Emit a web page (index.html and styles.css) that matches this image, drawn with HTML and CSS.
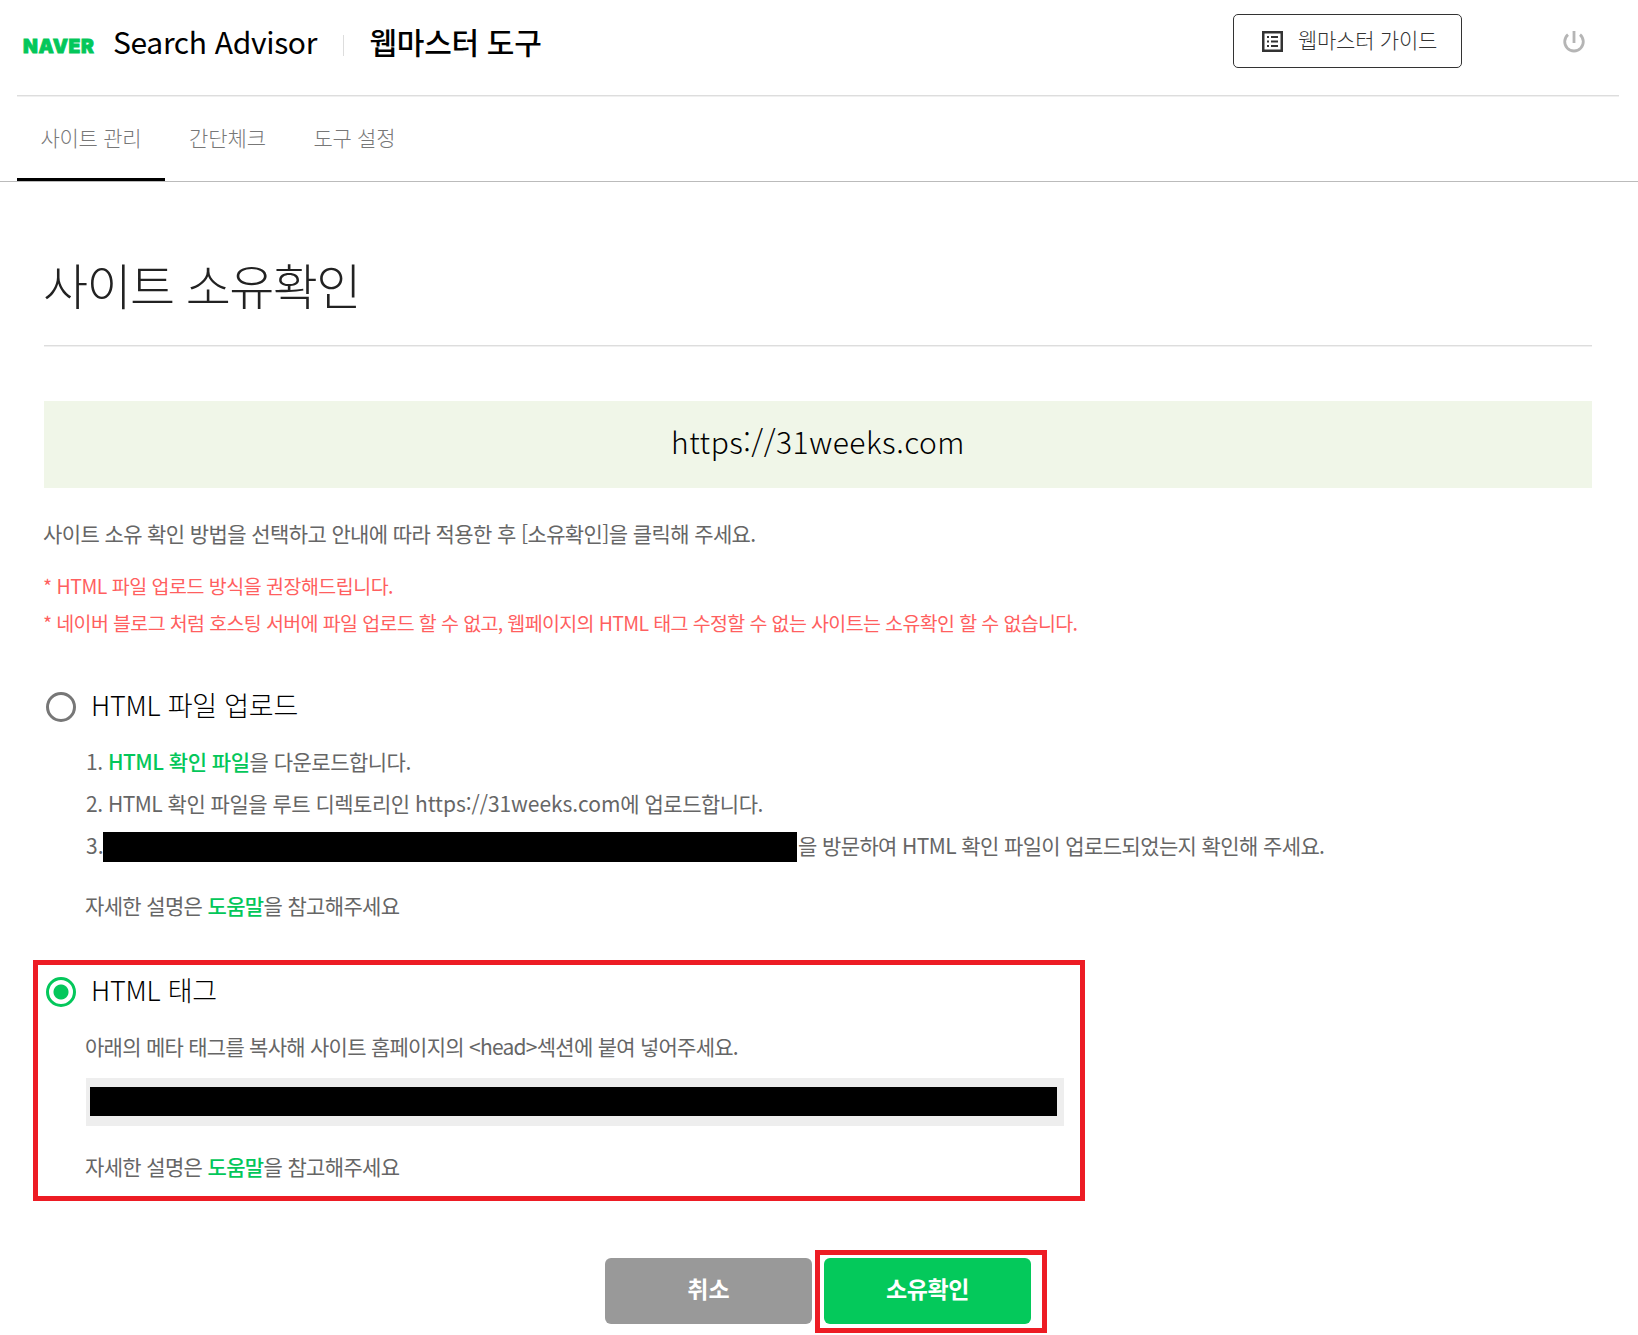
FILE: index.html
```html
<!DOCTYPE html>
<html lang="ko">
<head>
<meta charset="utf-8">
<title>사이트 소유확인</title>
<link rel="stylesheet" href="styles.css">
</head>
<body>
<header class="header">
  <span class="logo">NAVER</span>
  <span class="brand">Search Advisor</span>
  <span class="bar"></span>
  <span class="product">웹마스터 도구</span>
  <a class="guide">
    <svg class="guide-icon" viewBox="0 0 21 21"><path d="M1.250 1.250h18.500v18.500H1.250z" fill="none" stroke="#333" stroke-width="2.500"/><path d="M5 5h2v2H5zM5 9.500h2v2H5zM5 14h2v2H5zM9 5h7v2H9zM9 9.500h7v2H9zM9 14h7v2H9z" fill="#333"/></svg>
    <span>웹마스터 가이드</span>
  </a>
  <svg class="power" viewBox="0 0 22 22"><path d="M11 0v12M5 3.600a9.300 9.300 0 1 0 12 0" fill="none" stroke="#b5b5b5" stroke-width="2.800"/></svg>
</header>
<nav class="tabs">
  <a class="tab tab-site active">사이트 관리</a>
  <a class="tab tab-check">간단체크</a>
  <a class="tab tab-tool">도구 설정</a>
</nav>
<main class="main">
  <h1 class="title">사이트 소유확인</h1>
  <div class="site">https://31weeks.com</div>
  <p class="lead">사이트 소유 확인 방법을 선택하고 안내에 따라 적용한 후 [소유확인]을 클릭해 주세요.</p>
  <div class="notes">
    <p class="note-recommend">* HTML 파일 업로드 방식을 권장해드립니다.</p>
    <p class="note-limit">* 네이버 블로그 처럼 호스팅 서버에 파일 업로드 할 수 없고, 웹페이지의 HTML 태그 수정할 수 없는 사이트는 소유확인 할 수 없습니다.</p>
  </div>
  <section class="method upload">
    <div class="choice"><span class="radio"></span><span class="choice-name">HTML 파일 업로드</span></div>
    <div class="body">
      <p class="step-download">1. <span class="link">HTML 확인 파일</span>을 다운로드합니다.</p>
      <p class="step-upload">2. HTML 확인 파일을 루트 디렉토리인 <span class="url">https://31weeks.com</span>에 업로드합니다.</p>
      <p class="step-visit"><span class="number">3.</span><span class="redact redact-url"></span><span>을 방문하여 HTML 확인 파일이 업로드되었는지 확인해 주세요.</span></p>
      <p class="help">자세한 설명은 <span class="link">도움말</span>을 참고해주세요</p>
    </div>
  </section>
  <section class="method tag">
    <div class="choice"><span class="radio checked"></span><span class="choice-name">HTML 태그</span></div>
    <div class="body">
      <p class="tag-text">아래의 메타 태그를 복사해 사이트 홈페이지의 &lt;head&gt;섹션에 붙여 넣어주세요.</p>
      <div class="code"><span class="redact"></span></div>
      <p class="help">자세한 설명은 <span class="link">도움말</span>을 참고해주세요</p>
    </div>
  </section>
  <div class="actions">
    <button class="btn cancel">취소</button>
    <div class="confirm-wrap"><button class="btn confirm">소유확인</button></div>
  </div>
</main>
</body>
</html>
```
FILE: styles.css
```css
*, *::after { box-sizing: border-box; margin: 0; padding: 0; }
body { width: 1638px; height: 1335px; overflow: hidden; background: #fff; color: #666; font: 300 21px/42px "Noto Sans CJK KR", sans-serif; white-space: nowrap; }
.header { display: flex; height: 96px; margin: 0 19px 0 17px; border-bottom: 1px solid #ddd; box-shadow: 0 1px #f0f0f0; color: #000; }
.logo { width: 96px; padding: 26px 0 0 6px; color: #03c75a; font: 900 19.3px/40px Inter, sans-serif; letter-spacing: 0.6px; -webkit-text-stroke: 0.8px #03c75a; }
.brand { width: 230px; font-size: 30px; font-weight: 400; line-height: 82px; letter-spacing: -0.337px; }
.bar { width: 1px; height: 21px; margin-top: 35px; background: #ddd; }
.product { width: 200px; margin-left: 25.5px; font-size: 30px; font-weight: 500; line-height: 83px; letter-spacing: -0.286px; }
.guide { display: flex; width: 229px; height: 54px; margin: 14px 0 0 auto; padding: 0 0 0 28px; border: 1px solid #333; border-radius: 5px; color: #333; line-height: 48px; letter-spacing: -0.266px; }
.guide-icon { width: 21px; height: 21px; margin: 16px 15px 0 0; }
.power { width: 22px; height: 22px; margin: 31px 34px 0 101px; }
.tabs { display: flex; height: 86px; padding-left: 17px; border-bottom: 1px solid #bbb; color: #777; }
.tab { padding-left: 23.5px; line-height: 82px; border-bottom: 3px solid transparent; letter-spacing: -0.3px; }
.tab-site { width: 148px; }
.tab-check { width: 125px; padding-left: 24px; letter-spacing: -0.07px; }
.active { border-color: #000; }
.main { padding: 72px 46px 0 44px; }
.title { height: 92px; border-bottom: 1px solid #ddd; box-shadow: 0 1px #f0f0f0; color: #222; font-size: 49px; font-weight: 300; line-height: 60px; letter-spacing: -1.55px; text-indent: -1px; }
.site { height: 87px; margin-top: 55px; background: #f0f6e8; color: #000; font-size: 30px; line-height: 80px; letter-spacing: 0.5px; text-align: center; }
.lead { margin: 29px 0 0 -1px; font-weight: 400; line-height: 33px; letter-spacing: -0.605px; }
.notes { margin: 17px 0 0 -1px; color: #ff5f5f; font-size: 19.5px; font-weight: 400; line-height: 37px; }
.note-recommend { letter-spacing: -0.51px; }
.note-limit { letter-spacing: -0.635px; }
.method { position: relative; margin-top: 46px; }
.choice { display: flex; align-items: center; height: 40px; color: #000; font-size: 27px; letter-spacing: -0.237px; }
.radio { width: 30px; height: 30px; margin: 0 15px 0 2px; border: 3px solid #777; border-radius: 50%; }
.checked { border-color: #04c75b; background: radial-gradient(circle, #04c75b 7px, #fff 8px); }
.choice-name { line-height: 36px; padding-bottom: 4px; }
.body { padding: 13px 0 0 42px; font-weight: 400; }
.link { color: #03c75a; font-weight: 500; }
.step-download { letter-spacing: -0.5px; }
.step-upload { letter-spacing: -0.5px; }
.url { letter-spacing: -0.05px; }
.number { width: 17px; letter-spacing: 0; }
.step-visit { display: flex; letter-spacing: -0.61px; }
.redact { background: #000; }
.redact-url { width: 694px; height: 30px; margin: 8px 1px 0 0; }
.help { margin: 18px 0 0 -1px; letter-spacing: -0.65px; }
.tag { margin-top: 46px; }
.tag::after { content: ""; position: absolute; left: -11px; top: -12px; width: 1052px; height: 241px; border: 5px solid #ed1c24; }
.tag-text { margin-left: -1px; letter-spacing: -0.736px; }
.code { display: flex; width: 978px; height: 48px; margin-top: 11px; padding: 9px 7px 10px 4px; background: #eee; }
.code .redact { flex: 1; }
.tag .help { margin-top: 19px; }
.actions { display: flex; gap: 12px; margin: 71px 0 0 561px; }
.btn { width: 207px; height: 66px; padding-bottom: 5px; border: 0; border-radius: 6px; color: #fff; font: 700 23px/61px "Noto Sans CJK KR", sans-serif; letter-spacing: -0.41px; }
.cancel { background: #999; letter-spacing: 0; }
.confirm { display: block; background: #04c95b; }
.confirm-wrap { position: relative; }
.confirm-wrap::after { content: ""; position: absolute; left: -9px; top: -8px; width: 232px; height: 83px; border: 5px solid #ed1c24; }
```
